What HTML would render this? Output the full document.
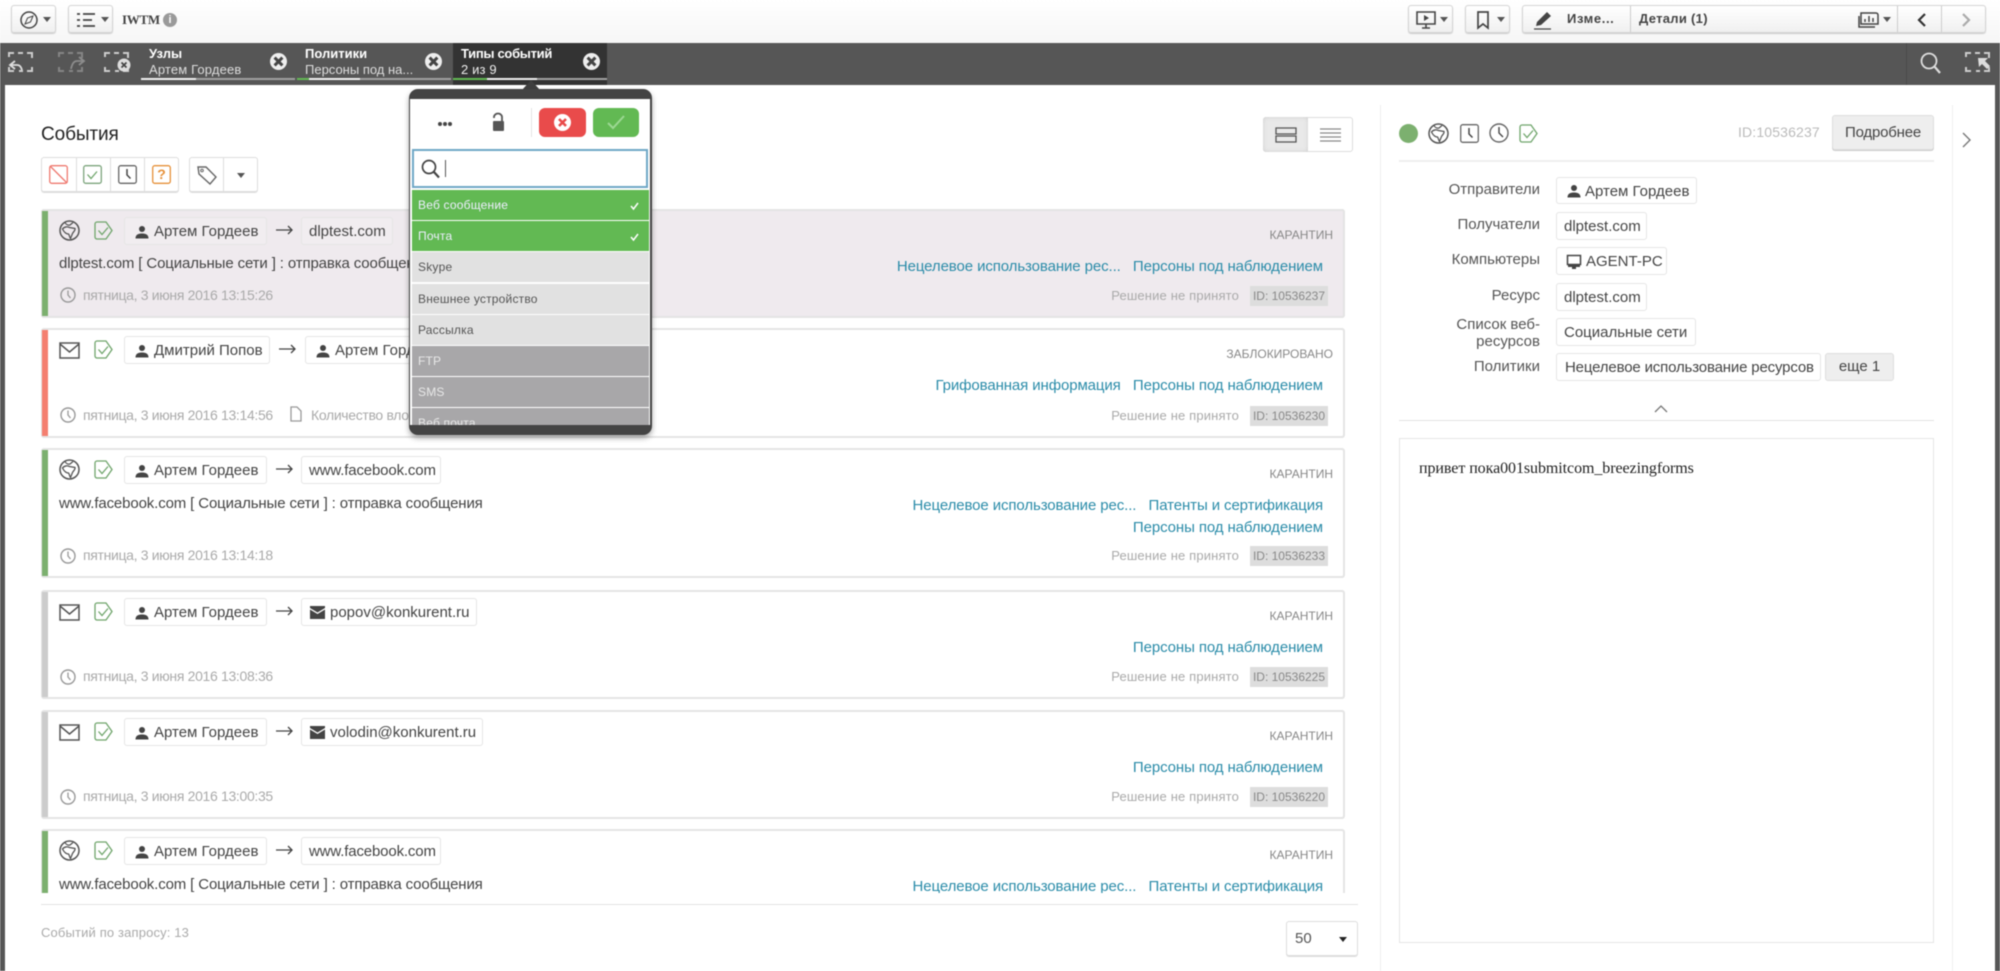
<!DOCTYPE html>
<html lang="ru"><head><meta charset="utf-8"><title>События</title>
<style>
*{box-sizing:border-box}
html,body{margin:0;padding:0;width:2000px;height:971px;overflow:hidden;background:#fff;font-family:"Liberation Sans",sans-serif;color:#444}
#root{position:relative;width:2000px;height:971px;overflow:hidden;filter:blur(.55px)}
.a{position:absolute}
.t{position:absolute;white-space:nowrap}
svg{position:absolute;overflow:visible;fill:none}
.btn{position:absolute;top:5px;height:28px;border:1px solid #d4d4d4;border-radius:3px;background:linear-gradient(#fff,#f0f0f0);box-shadow:0 1px 1px #ccc}
.caret{position:absolute;width:0;height:0;border-left:4px solid transparent;border-right:4px solid transparent;border-top:5px solid #555}
.tab{position:absolute;top:43px;width:154px;height:42px;color:#fff}
.tab b{position:absolute;left:8px;top:3px;font-size:13px;line-height:16px;white-space:nowrap}
.tab span{position:absolute;left:8px;top:19px;font-size:13px;line-height:16px;white-space:nowrap;color:#ddd;letter-spacing:.15px}
.ul{position:absolute;left:0;right:0;top:35px;height:2px;background:#a0a0a0}
.x{position:absolute;top:10px;left:129px;width:17px;height:17px;border-radius:50%;background:#eee}
.x:before,.x:after{content:"";position:absolute;left:7px;top:3px;width:3px;height:11px;background:#444;transform:rotate(45deg)}
.x:after{transform:rotate(-45deg)}
.card{position:absolute;left:0;width:1304px;background:#fff;box-shadow:inset 0 0 0 2px #e4e4e4;border-radius:3px}
.strip{position:absolute;left:1px;top:2px;bottom:2px;width:6px}
.chip{position:absolute;height:28px;background:#fff;border:1px solid #e5e5e5;border-radius:3px;font-size:15px;line-height:27px;color:#444;white-space:nowrap}
.chip span{position:absolute;top:0}
.body{position:absolute;left:18px;top:45px;font-size:15px;line-height:20px;color:#444;white-space:nowrap;letter-spacing:-.13px}
.date{position:absolute;left:42px;bottom:14px;font-size:14px;line-height:18px;color:#aaa;white-space:nowrap;letter-spacing:-.33px}
.st{position:absolute;right:12px;top:18px;font-size:12px;line-height:16px;color:#888;white-space:nowrap}
.lk{position:absolute;right:22px;font-size:15px;line-height:18px;color:#2b8ca9;white-space:nowrap;letter-spacing:-.1px}
.dec{position:absolute;right:106px;bottom:13px;font-size:13px;line-height:18px;color:#aaa;white-space:nowrap;letter-spacing:.15px}
.idb{position:absolute;right:17px;bottom:12px;width:78px;height:20px;background:#ddd;font-size:12px;line-height:20px;text-align:center;color:#888}
.lab{position:absolute;right:460px;font-size:15px;line-height:18px;color:#555;text-align:right}
.item{position:absolute;left:412px;width:237px;height:30px;font-size:12px;line-height:30px;padding-left:6px;letter-spacing:.2px}
.g{background:#62b953;color:#eef}
.l{background:#e1e1e1;color:#555}
.d{background:#a8a7a9;color:#e8e8e8}
</style></head><body><div id="root">
<svg width="0" height="0" style="position:absolute">
<defs>
<symbol id="globe" viewBox="0 0 21 21"><circle cx="10.5" cy="10.5" r="9.5" stroke="#555" stroke-width="1.500" fill="none"/><path d="M6 2.500c1 2 3 3 5 2.500l3-2.500M3.500 9c2-2.500 5-2.500 7-1.500l5.500 1c.5 2-1.500 3-2.500 5l-2 5c-1-1-1-3.500-2-4.500-2.500 0-4.500-2-6-5z" stroke="#555" stroke-width="1.300" fill="none"/></symbol>
<symbol id="mail" viewBox="0 0 21 17"><path d="M1 1h19v15H1zM1 2l9.500 8 9.500-8" stroke="#555" stroke-width="1.500" fill="none"/></symbol>
<symbol id="chk" viewBox="0 0 19 19"><path d="M3 1h9l6 8.500-6 8.500H3a2 2 0 0 1-2-2V3a2 2 0 0 1 2-2z" stroke="#6fa56b" stroke-width="1.300" fill="none"/><path d="M4.500 9.500l3.500 4 6-7" stroke="#6fa56b" stroke-width="1.300" fill="none"/></symbol>
<symbol id="usr" viewBox="0 0 14 14"><circle cx="7" cy="4" r="3" fill="#444"/><path d="M0.500 13.500c0-4 3-5 6.500-5s6.500 1 6.500 5z" fill="#444"/></symbol>
<symbol id="clk" viewBox="0 0 16 16"><circle cx="8" cy="8" r="7" stroke="#999" stroke-width="1.400" fill="none"/><path d="M8 3.500V8l2.500 3" stroke="#999" stroke-width="1.300" fill="none"/></symbol>
<symbol id="env" viewBox="0 0 15 13"><path d="M0 0h15v2L7.500 6.500 0 2z" fill="#444"/><path d="M0 3.500l7.500 4.500L15 3.500V13H0z" fill="#444"/></symbol>
<symbol id="corn" viewBox="0 0 25 20"><path d="M1 5V1h5M10 1h5M19 1h5v5M24 15v4h-5M15 19h-4M6 19H1v-4" stroke="#ccc" stroke-width="2" fill="none"/></symbol>
</defs></svg>

<!-- top toolbar -->
<div class="a" style="left:0;top:0;width:2000px;height:43px;background:linear-gradient(#fff,#f6f6f6)"></div>
<div class="btn" style="left:11px;width:45px"><svg style="left:8px;top:5px" width="18" height="18"><circle cx="9" cy="9" r="8" stroke="#444" stroke-width="1.500"/><path d="M13 5l-2.500 6L5 13l2.500-6z" stroke="#444"/></svg><i class="caret" style="left:31px;top:11px"></i></div>
<div class="btn" style="left:68px;width:45px"><svg style="left:8px;top:6px" width="20" height="16"><path d="M0 2h3M6 2h12M0 8h3M6 8h9M0 14h3M6 14h12" stroke="#444" stroke-width="1.800"/></svg><i class="caret" style="left:32px;top:11px"></i></div>
<div class="t" style="left:122px;top:12px;font-size:13px;line-height:16px;font-weight:bold;color:#444;font-family:'Liberation Serif',serif;letter-spacing:-.3px">IWTM</div>
<div class="a" style="left:163px;top:13px;width:14px;height:14px;border-radius:50%;background:#9a9a9a;color:#fff;font-size:11px;line-height:14px;text-align:center;font-weight:bold">i</div>

<div class="btn" style="left:1408px;width:45px"><svg style="left:7px;top:5px" width="20" height="18"><path d="M1 1h18v12H1zM10 13v4M6 17h8" stroke="#444" stroke-width="1.600"/><path d="M8 4l5 3-5 3z" fill="#444"/></svg><i class="caret" style="left:31px;top:11px"></i></div>
<div class="btn" style="left:1465px;width:45px"><svg style="left:11px;top:5px" width="13" height="18"><path d="M1 1h10v16l-5-4-5 4z" stroke="#444" stroke-width="1.700"/></svg><i class="caret" style="left:31px;top:11px"></i></div>
<div class="btn" style="left:1522px;width:464px">
 <svg style="left:11px;top:5px" width="20" height="19"><path d="M2 15l1-4L13 1l4 4L7 14z" fill="#444"/><path d="M0 18h17" stroke="#444" stroke-width="1.200"/></svg>
 <div class="t" style="left:44px;top:5px;font-size:13px;line-height:16px;font-weight:bold;letter-spacing:.6px">Изме...</div>
 <div class="a" style="left:107px;top:0;width:1px;height:26px;background:#ccc"></div>
 <div class="t" style="left:116px;top:5px;font-size:13px;line-height:16px;font-weight:bold;letter-spacing:.3px">Детали (1)</div>
 <svg style="left:335px;top:6px" width="22" height="17"><path d="M3 1h15a2 2 0 0 1 2 2v9H3zM1 4v11h16" stroke="#444" stroke-width="1.500"/><path d="M7 10V7M11 10V4M15 10V6" stroke="#444" stroke-width="1.500"/></svg>
 <i class="caret" style="left:360px;top:11px"></i>
 <div class="a" style="left:374px;top:0;width:1px;height:26px;background:#ccc"></div>
 <svg style="left:394px;top:7px" width="10" height="14"><path d="M8 1L2 7l6 6" stroke="#333" stroke-width="2.200"/></svg>
 <div class="a" style="left:418px;top:0;width:1px;height:26px;background:#ccc"></div>
 <svg style="left:438px;top:7px" width="10" height="14"><path d="M2 1l6 6-6 6" stroke="#aaa" stroke-width="2.200"/></svg>
</div>

<!-- dark frame -->
<div class="a" style="left:0;top:43px;width:2000px;height:42px;background:#565656"></div>
<div class="a" style="left:0;top:85px;width:5px;height:886px;background:#565656"></div>
<div class="a" style="left:1995px;top:85px;width:5px;height:886px;background:#565656"></div>
<svg style="left:8px;top:52px" width="25" height="20"><use href="#corn" width="25" height="20"/><path d="M7 9L2 13l5 4M2 13h7c3 0 4 2 5 5" stroke="#ddd" stroke-width="1.800"/></svg>
<svg style="left:58px;top:52px;opacity:.4" width="25" height="20"><use href="#corn" width="25" height="20"/><path d="M21 5l5 4-5 4M26 9h-7c-3 0-5 3-6 8" stroke="#ddd" stroke-width="1.800"/></svg>
<svg style="left:104px;top:52px" width="25" height="20"><use href="#corn" width="25" height="20"/><circle cx="20" cy="13" r="6.500" fill="#ddd"/><path d="M17.500 10.500l5 5M22.500 10.500l-5 5" stroke="#444" stroke-width="1.700"/></svg>
<div class="tab" style="left:141px"><b>Узлы</b><span>Артем Гордеев</span><i class="x"></i><div class="ul"></div><div class="a" style="left:0;top:35px;width:55px;height:2px;background:#f0f0f0"></div></div>
<div class="tab" style="left:297px"><b>Политики</b><span style="letter-spacing:0">Персоны под на...</span><i class="x" style="left:128px"></i><div class="ul"></div><div class="a" style="left:0;top:35px;width:12px;height:2px;background:#62b953"></div><div class="a" style="left:12px;top:35px;width:51px;height:2px;background:#f0f0f0"></div></div>
<div class="tab" style="left:453px;background:#333"><b style="letter-spacing:-.3px">Типы событий</b><span style="color:#eee">2 из 9</span><i class="x" style="left:130px"></i><div class="ul"></div><div class="a" style="left:0;top:35px;width:34px;height:2px;background:#62b953"></div><div class="a" style="left:34px;top:35px;width:50px;height:2px;background:#f0f0f0"></div></div>
<div class="a" style="left:1906px;top:43px;width:1px;height:42px;background:#4a4a4a"></div>
<svg style="left:1920px;top:52px" width="22" height="22"><circle cx="9" cy="9" r="7.500" stroke="#ddd" stroke-width="1.800"/><path d="M14 14l6 7" stroke="#ddd" stroke-width="2.200"/></svg>
<svg style="left:1965px;top:52px" width="25" height="20"><use href="#corn" width="25" height="20"/><path d="M13 6h10l-3 3 5 5-3 3-5-5-3 3z" fill="#ddd"/></svg>

<!-- left column -->
<div class="t" style="left:41px;top:124px;font-size:19px;line-height:22px;color:#222;letter-spacing:-.1px">События</div>
<div class="a" style="left:41px;top:157px;width:138px;height:35px;border:1px solid #ddd;border-radius:3px;box-shadow:0 1px 0 #ddd"></div>
<div class="a" style="left:76px;top:157px;width:1px;height:35px;background:#ddd"></div>
<div class="a" style="left:110px;top:157px;width:1px;height:35px;background:#ddd"></div>
<div class="a" style="left:144px;top:157px;width:1px;height:35px;background:#ddd"></div>
<svg style="left:49px;top:165px" width="19" height="19"><rect x=".7" y=".7" width="17.600" height="17.600" rx="2" stroke="#ef7a70" stroke-width="1.300"/><path d="M1 1l17 17" stroke="#ef7a70" stroke-width="1.300"/></svg>
<svg style="left:83px;top:165px" width="19" height="19"><rect x=".7" y=".7" width="17.600" height="17.600" rx="2" stroke="#7da57d" stroke-width="1.300"/><path d="M4.500 9.500l3.500 4 6-7" stroke="#6fa56b" stroke-width="1.300"/></svg>
<svg style="left:118px;top:165px" width="19" height="19"><rect x=".7" y=".7" width="17.600" height="17.600" rx="2" stroke="#666" stroke-width="1.300"/><path d="M9 4v6l3.500 3.500" stroke="#444" stroke-width="1.500"/></svg>
<svg style="left:152px;top:165px" width="19" height="19"><rect x=".7" y=".7" width="17.600" height="17.600" rx="2" stroke="#e6913a" stroke-width="1.300"/></svg>
<div class="a" style="left:152px;top:165px;width:19px;height:19px;text-align:center;font-size:14px;line-height:19px;font-weight:bold;color:#e6913a">?</div>
<div class="a" style="left:189px;top:157px;width:69px;height:35px;border:1px solid #ddd;border-radius:3px;box-shadow:0 1px 0 #ddd"></div>
<div class="a" style="left:223px;top:157px;width:1px;height:35px;background:#ddd"></div>
<svg style="left:197px;top:165px" width="21" height="20"><path d="M1 2h8l10 10-6 7L2 9z" stroke="#666" stroke-width="1.400"/><circle cx="5" cy="5.500" r="1.300" stroke="#666"/></svg>
<i class="caret" style="left:237px;top:173px"></i>

<div class="a" style="left:1263px;top:117px;width:90px;height:35px;border:1px solid #ddd;border-radius:3px"></div>
<div class="a" style="left:1263px;top:117px;width:45px;height:35px;background:#e9e9e9;border-radius:3px 0 0 3px;box-shadow:inset 0 0 4px #ccc"></div>
<svg style="left:1275px;top:127px" width="22" height="16"><path d="M1 1h20v6H1zM1 9h20v6H1z" stroke="#555" stroke-width="1.300"/></svg>
<svg style="left:1320px;top:128px" width="22" height="14"><path d="M0 1h21M0 5h21M0 9h21M0 13h21" stroke="#888" stroke-width="1.200"/></svg>

<div class="a" style="left:41px;top:209px;width:1304px;height:684px;overflow:hidden">

<div class="card" style="top:0;height:109px;background:#efeaee">
 <div class="strip" style="background:#7cb06f"></div>
 <svg style="left:18px;top:11px" width="21" height="21"><use href="#globe"/></svg>
 <svg style="left:53px;top:12px" width="19" height="19"><use href="#chk"/></svg>
 <div class="chip" style="left:83px;top:8px;width:143px;background:#f1edf0"><svg style="left:10px;top:7px" width="14" height="14"><use href="#usr"/></svg><span style="left:29px">Артем Гордеев</span></div>
 <svg style="left:235px;top:16px" width="18" height="10"><path d="M0 5h16M12 1l4 4-4 4" stroke="#444" stroke-width="1.300"/></svg>
 <div class="chip" style="left:260px;top:8px;width:92px;background:#f1edf0"><span style="left:7px">dlptest.com</span></div>
 <div class="body">dlptest.com [ Социальные сети ] : отправка сообщения</div>
 <svg style="left:19px;top:78px" width="16" height="16"><use href="#clk"/></svg>
 <div class="date">пятница, 3 июня 2016 13:15:26</div>
 <div class="st">КАРАНТИН</div>
 <div class="lk" style="top:49px">Нецелевое использование рес...&nbsp;&nbsp; Персоны под наблюдением</div>
 <div class="dec">Решение не принято</div><div class="idb">ID: 10536237</div>
</div>

<div class="card" style="top:119px;height:110px">
 <div class="strip" style="background:#f47f70"></div>
 <svg style="left:18px;top:14px" width="21" height="17"><use href="#mail"/></svg>
 <svg style="left:53px;top:12px" width="19" height="19"><use href="#chk"/></svg>
 <div class="chip" style="left:83px;top:8px;width:146px"><svg style="left:10px;top:7px" width="14" height="14"><use href="#usr"/></svg><span style="left:29px">Дмитрий Попов</span></div>
 <svg style="left:238px;top:16px" width="18" height="10"><path d="M0 5h16M12 1l4 4-4 4" stroke="#444" stroke-width="1.300"/></svg>
 <div class="chip" style="left:264px;top:8px;width:143px"><svg style="left:10px;top:7px" width="14" height="14"><use href="#usr"/></svg><span style="left:29px">Артем Гордеев</span></div>
 <svg style="left:19px;top:79px" width="16" height="16"><use href="#clk"/></svg>
 <div class="date">пятница, 3 июня 2016 13:14:56</div>
 <svg style="left:249px;top:78px" width="12" height="16"><path d="M1 1h6l4 4v10H1z" stroke="#999" stroke-width="1.300"/></svg>
 <div class="date" style="left:270px">Количество вложений: 1</div>
 <div class="st">ЗАБЛОКИРОВАНО</div>
 <div class="lk" style="top:49px">Грифованная информация&nbsp;&nbsp; Персоны под наблюдением</div>
 <div class="dec">Решение не принято</div><div class="idb">ID: 10536230</div>
</div>

<div class="card" style="top:239px;height:130px">
 <div class="strip" style="background:#7cb06f"></div>
 <svg style="left:18px;top:11px" width="21" height="21"><use href="#globe"/></svg>
 <svg style="left:53px;top:12px" width="19" height="19"><use href="#chk"/></svg>
 <div class="chip" style="left:83px;top:8px;width:143px"><svg style="left:10px;top:7px" width="14" height="14"><use href="#usr"/></svg><span style="left:29px">Артем Гордеев</span></div>
 <svg style="left:235px;top:16px" width="18" height="10"><path d="M0 5h16M12 1l4 4-4 4" stroke="#444" stroke-width="1.300"/></svg>
 <div class="chip" style="left:260px;top:8px;width:140px"><span style="left:7px;letter-spacing:-.15px">www.facebook.com</span></div>
 <div class="body" style="top:46px">www.facebook.com [ Социальные сети ] : отправка сообщения</div>
 <svg style="left:19px;top:100px" width="16" height="16"><use href="#clk"/></svg>
 <div class="date">пятница, 3 июня 2016 13:14:18</div>
 <div class="st">КАРАНТИН</div>
 <div class="lk" style="top:49px">Нецелевое использование рес...&nbsp;&nbsp; Патенты и сертификация</div>
 <div class="lk" style="top:71px">Персоны под наблюдением</div>
 <div class="dec">Решение не принято</div><div class="idb">ID: 10536233</div>
</div>

<div class="card" style="top:381px;height:109px">
 <div class="strip" style="background:#ccc"></div>
 <svg style="left:18px;top:14px" width="21" height="17"><use href="#mail"/></svg>
 <svg style="left:53px;top:12px" width="19" height="19"><use href="#chk"/></svg>
 <div class="chip" style="left:83px;top:8px;width:143px"><svg style="left:10px;top:7px" width="14" height="14"><use href="#usr"/></svg><span style="left:29px">Артем Гордеев</span></div>
 <svg style="left:235px;top:16px" width="18" height="10"><path d="M0 5h16M12 1l4 4-4 4" stroke="#444" stroke-width="1.300"/></svg>
 <div class="chip" style="left:260px;top:8px;width:176px"><svg style="left:8px;top:7px" width="15" height="13"><use href="#env"/></svg><span style="left:28px">popov@konkurent.ru</span></div>
 <svg style="left:19px;top:79px" width="16" height="16"><use href="#clk"/></svg>
 <div class="date">пятница, 3 июня 2016 13:08:36</div>
 <div class="st">КАРАНТИН</div>
 <div class="lk" style="top:49px">Персоны под наблюдением</div>
 <div class="dec">Решение не принято</div><div class="idb">ID: 10536225</div>
</div>

<div class="card" style="top:501px;height:109px">
 <div class="strip" style="background:#ccc"></div>
 <svg style="left:18px;top:14px" width="21" height="17"><use href="#mail"/></svg>
 <svg style="left:53px;top:12px" width="19" height="19"><use href="#chk"/></svg>
 <div class="chip" style="left:83px;top:8px;width:143px"><svg style="left:10px;top:7px" width="14" height="14"><use href="#usr"/></svg><span style="left:29px">Артем Гордеев</span></div>
 <svg style="left:235px;top:16px" width="18" height="10"><path d="M0 5h16M12 1l4 4-4 4" stroke="#444" stroke-width="1.300"/></svg>
 <div class="chip" style="left:260px;top:8px;width:182px"><svg style="left:8px;top:7px" width="15" height="13"><use href="#env"/></svg><span style="left:28px">volodin@konkurent.ru</span></div>
 <svg style="left:19px;top:79px" width="16" height="16"><use href="#clk"/></svg>
 <div class="date">пятница, 3 июня 2016 13:00:35</div>
 <div class="st">КАРАНТИН</div>
 <div class="lk" style="top:49px">Персоны под наблюдением</div>
 <div class="dec">Решение не принято</div><div class="idb">ID: 10536220</div>
</div>

<div class="card" style="top:620px;height:130px">
 <div class="strip" style="background:#7cb06f"></div>
 <svg style="left:18px;top:11px" width="21" height="21"><use href="#globe"/></svg>
 <svg style="left:53px;top:12px" width="19" height="19"><use href="#chk"/></svg>
 <div class="chip" style="left:83px;top:8px;width:143px"><svg style="left:10px;top:7px" width="14" height="14"><use href="#usr"/></svg><span style="left:29px">Артем Гордеев</span></div>
 <svg style="left:235px;top:16px" width="18" height="10"><path d="M0 5h16M12 1l4 4-4 4" stroke="#444" stroke-width="1.300"/></svg>
 <div class="chip" style="left:260px;top:8px;width:140px"><span style="left:7px;letter-spacing:-.15px">www.facebook.com</span></div>
 <div class="body" style="top:46px">www.facebook.com [ Социальные сети ] : отправка сообщения</div>
 <div class="st">КАРАНТИН</div>
 <div class="lk" style="top:49px">Нецелевое использование рес...&nbsp;&nbsp; Патенты и сертификация</div>
</div>
</div>

<div class="a" style="left:41px;top:904px;width:1317px;height:1px;background:#e3e3e3"></div>
<div class="t" style="left:41px;top:925px;font-size:13px;line-height:16px;color:#aaa;letter-spacing:.15px">Событий по запросу: 13</div>
<div class="a" style="left:1286px;top:921px;width:72px;height:35px;border:1px solid #ddd;border-radius:3px;box-shadow:0 1px 0 #ddd;font-size:15px;line-height:33px;padding-left:8px;color:#555">50</div>
<i class="caret" style="left:1339px;top:937px;border-top-color:#222"></i>

<!-- right column -->
<div class="a" style="left:1380px;top:105px;width:1px;height:866px;background:#eee"></div>
<div class="a" style="left:1952px;top:105px;width:1px;height:866px;background:#f0f0f0"></div>
<div class="a" style="left:1399px;top:124px;width:19px;height:19px;border-radius:50%;background:#7cb06f"></div>
<svg style="left:1428px;top:123px" width="21" height="21"><use href="#globe"/></svg>
<svg style="left:1460px;top:124px" width="19" height="19"><rect x=".7" y=".7" width="17.600" height="17.600" rx="2" stroke="#666" stroke-width="1.300"/><path d="M9 4v6l3.500 3.500" stroke="#444" stroke-width="1.500"/></svg>
<svg style="left:1489px;top:123px" width="20" height="20"><circle cx="10" cy="10" r="9" stroke="#666" stroke-width="1.400"/><path d="M10 4v6l4 4" stroke="#444" stroke-width="1.400"/></svg>
<svg style="left:1519px;top:124px" width="19" height="19"><use href="#chk"/></svg>
<div class="t" style="left:1738px;top:123px;font-size:14px;line-height:18px;color:#bbb;letter-spacing:.15px">ID:10536237</div>
<div class="a" style="left:1832px;top:115px;width:102px;height:35px;background:#eee;border:1px solid #ddd;border-radius:3px;box-shadow:0 1px 0 #ccc;font-size:15px;line-height:33px;text-align:center;color:#444;letter-spacing:-.2px">Подробнее</div>
<svg style="left:1962px;top:132px" width="10" height="16"><path d="M1 1l7 7-7 7" stroke="#777" stroke-width="1.400"/></svg>
<div class="a" style="left:1399px;top:160px;width:535px;height:2px;background:#eee"></div>

<div class="lab" style="top:181px">Отправители</div>
<div class="lab" style="top:216px">Получатели</div>
<div class="lab" style="top:251px">Компьютеры</div>
<div class="lab" style="top:287px">Ресурс</div>
<div class="lab" style="top:316px;font-size:15px;line-height:17px;width:100px">Список веб-ресурсов</div>
<div class="lab" style="top:358px">Политики</div>
<div class="chip" style="left:1556px;top:177px;width:141px;height:27px"><svg style="left:10px;top:6px" width="14" height="14"><use href="#usr"/></svg><span style="left:28px">Артем Гордеев</span></div>
<div class="chip" style="left:1556px;top:212px;width:91px"><span style="left:7px">dlptest.com</span></div>
<div class="chip" style="left:1556px;top:247px;width:111px"><svg style="left:9px;top:6px" width="16" height="16"><path d="M1.500 1.500h13v9h-13z" stroke="#444" stroke-width="1.500"/><path d="M2 11h12v2H10v2H6v-2H2z" fill="#444"/></svg><span style="left:29px">AGENT-PC</span></div>
<div class="chip" style="left:1556px;top:283px;width:91px"><span style="left:7px">dlptest.com</span></div>
<div class="chip" style="left:1556px;top:318px;width:140px"><span style="left:7px">Социальные сети</span></div>
<div class="chip" style="left:1556px;top:353px;width:265px"><span style="left:8px;letter-spacing:-.16px">Нецелевое использование ресурсов</span></div>
<div class="a" style="left:1825px;top:353px;width:69px;height:28px;background:#eee;border:1px solid #ddd;border-radius:3px;font-size:15px;line-height:26px;text-align:center;color:#444">еще 1</div>
<svg style="left:1654px;top:404px" width="14" height="9"><path d="M1 8l6-6 6 6" stroke="#777" stroke-width="1.300"/></svg>
<div class="a" style="left:1399px;top:420px;width:535px;height:1px;background:#e3e3e3"></div>
<div class="a" style="left:1399px;top:438px;width:535px;height:505px;border:1px solid #e5e5e5"></div>
<div class="t" style="left:1419px;top:460px;font-family:'Liberation Serif',serif;font-size:16px;line-height:18px;color:#222;letter-spacing:-.07px">привет пока001submitcom_breezingforms</div>

<!-- popup -->
<div class="a" style="left:522px;top:80px;width:0;height:0;border-left:9px solid transparent;border-right:9px solid transparent;border-bottom:10px solid #3f3f3f"></div>
<div class="a" style="left:409px;top:89px;width:243px;height:346px;background:#444;border-radius:9px;box-shadow:0 3px 6px rgba(0,0,0,.35)"></div>
<div class="a" style="left:410px;top:99px;width:240px;height:326px;background:#fff"></div>
<div class="a" style="left:438px;top:122px;width:4px;height:4px;border-radius:50%;background:#444;box-shadow:5px 0 0 #444,10px 0 0 #444"></div>
<svg style="left:492px;top:113px" width="14" height="19"><path d="M2 5V4a4 3.500 0 0 1 8 0v5" stroke="#555" stroke-width="1.800"/><rect x="1" y="8" width="11" height="10" rx="1" fill="#555"/></svg>
<div class="a" style="left:531px;top:108px;width:1px;height:29px;background:#e3e3e3"></div>
<div class="a" style="left:539px;top:108px;width:47px;height:29px;background:#e94b4b;border-radius:6px"></div>
<div class="a" style="left:554px;top:114px;width:17px;height:17px;border-radius:50%;background:#fff"></div>
<svg style="left:554px;top:114px" width="17" height="17"><path d="M5 5l7 7M12 5l-7 7" stroke="#e94b4b" stroke-width="2.600"/></svg>
<div class="a" style="left:593px;top:108px;width:46px;height:29px;background:#62b953;border-radius:6px"></div>
<svg style="left:607px;top:115px" width="18" height="15"><path d="M1 8l5 5L17 1" stroke="#9cd893" stroke-width="2"/></svg>
<div class="a" style="left:412px;top:149px;width:236px;height:39px;border:2px solid #6fa8c6;background:#fff"></div>
<svg style="left:421px;top:159px" width="20" height="20"><circle cx="8" cy="8" r="6.500" stroke="#444" stroke-width="1.700"/><path d="M12.500 12.500l5.500 6" stroke="#444" stroke-width="2.200"/></svg>
<div class="a" style="left:445px;top:160px;width:1px;height:17px;background:#555"></div>
<div class="a" style="left:412px;top:190px;width:237px;height:235px;overflow:hidden">
 <div class="item g" style="left:0;top:0">Веб сообщение</div>
 <div class="item g" style="left:0;top:31px">Почта</div>
 <div class="item l" style="left:0;top:62px">Skype</div>
 <div class="item l" style="left:0;top:94px">Внешнее устройство</div>
 <div class="item l" style="left:0;top:125px">Рассылка</div>
 <div class="item d" style="left:0;top:156px">FTP</div>
 <div class="item d" style="left:0;top:187px">SMS</div>
 <div class="item d" style="left:0;top:218px">Веб почта</div>
 <svg style="left:218px;top:12px" width="9" height="8"><path d="M1 4l2.500 3L8 1" stroke="#fff" stroke-width="1.500"/></svg>
 <svg style="left:218px;top:43px" width="9" height="8"><path d="M1 4l2.500 3L8 1" stroke="#fff" stroke-width="1.500"/></svg>
</div>
</div></body></html>
